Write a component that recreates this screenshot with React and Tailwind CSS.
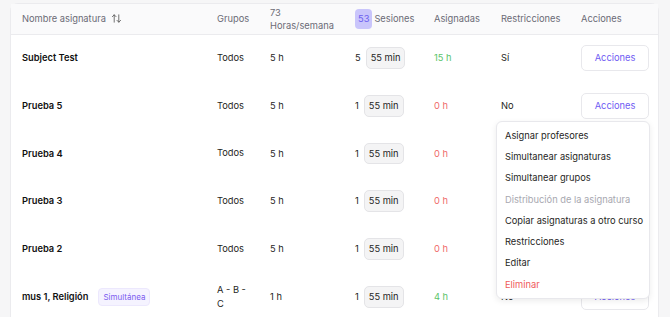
import React from 'react';
import { ArrowUpDown } from 'lucide-react';

const rows = [
  { name: 'Subject Test', grupos: 'Todos', horas: '5 h', count: 5, dur: '55 min', asig: '15 h', ok: true, restr: 'Sí' },
  { name: 'Prueba 5', grupos: 'Todos', horas: '5 h', count: 1, dur: '55 min', asig: '0 h', ok: false, restr: 'No' },
  { name: 'Prueba 4', grupos: 'Todos', horas: '5 h', count: 1, dur: '55 min', asig: '0 h', ok: false, restr: 'No' },
  { name: 'Prueba 3', grupos: 'Todos', horas: '5 h', count: 1, dur: '55 min', asig: '0 h', ok: false, restr: 'No' },
  { name: 'Prueba 2', grupos: 'Todos', horas: '5 h', count: 1, dur: '55 min', asig: '0 h', ok: false, restr: 'No' },
  { name: 'mus 1, Religión', tag: 'Simultánea', grupos: 'A - B - C', horas: '1 h', count: 1, dur: '55 min', asig: '4 h', ok: true, restr: 'No' },
];

const menuItems = [
  { label: 'Asignar profesores' },
  { label: 'Simultanear asignaturas' },
  { label: 'Simultanear grupos' },
  { label: 'Distribución de la asignatura', disabled: true },
  { label: 'Copiar asignaturas a otro curso' },
  { label: 'Restricciones' },
  { label: 'Editar' },
  { label: 'Eliminar', danger: true },
];

const App = () => {
  return (
    <div className="h-[317px] overflow-hidden bg-[#f6f6f7] pt-[3px] pl-[10px] pr-[11px] font-['Inter',sans-serif] text-[9.3px]">
      <div className="relative h-[400px] rounded-t-[8px] border border-[#ebebee] bg-white">
        <table className="w-full table-fixed border-collapse">
          <colgroup>
            <col className="w-[194px]" />
            <col className="w-[53px]" />
            <col className="w-[85px]" />
            <col className="w-[79px]" />
            <col className="w-[67px]" />
            <col className="w-[80px]" />
            <col />
          </colgroup>
          <thead>
            <tr className="h-[30px] bg-[#fafafb] text-left text-[#6b6b76] border-b border-[#ebebee]">
              <th className="pl-[11px] font-normal">
                <div className="flex items-center gap-[5px]">
                  Nombre asignatura
                  <ArrowUpDown className="h-[11px] w-[11px] text-[#555]" strokeWidth={1.8} />
                </div>
              </th>
              <th className="pl-[12px] font-normal">Grupos</th>
              <th className="pl-[12px] font-normal leading-[13px]">
                <div>73</div>
                <div>Horas/semana</div>
              </th>
              <th className="pl-[12px] font-normal">
                <div className="flex items-center gap-[2px]">
                  <span className="rounded-[4px] bg-[#c9c5fb] px-[3px] py-[3px] text-[#6c5ef0]">53</span>
                  Sesiones
                </div>
              </th>
              <th className="pl-[12px] font-normal">Asignadas</th>
              <th className="pl-[12px] font-normal">Restricciones</th>
              <th className="pl-[12px] font-normal">Acciones</th>
            </tr>
          </thead>
          <tbody>
            {rows.map((r) => (
              <tr key={r.name} className="h-[47.8px] text-[#1f1f24]">
                <td className="pl-[11px]">
                  <div className="flex items-center gap-[10px]">
                    <span className="font-semibold text-[#111]">{r.name}</span>
                    {r.tag && (
                      <span className="rounded-[4px] border border-[#ece8fd] bg-[#f5f3ff] px-[4px] py-[3px] text-[8px] leading-[10px] text-[#7c5cf0]">
                        {r.tag}
                      </span>
                    )}
                  </div>
                </td>
                <td className="pl-[12px] pr-[8px] leading-[14px]">{r.grupos}</td>
                <td className="pl-[12px]">{r.horas}</td>
                <td className="pl-[12px]">
                  <div className="flex items-center gap-[5px]">
                    <span>{r.count}</span>
                    <span className="rounded-[5px] border border-[#e4e4e7] bg-[#f4f4f5] px-[4px] py-[3px]">{r.dur}</span>
                  </div>
                </td>
                <td className={`pl-[12px] ${r.ok ? 'text-[#5cc46a]' : 'text-[#ef6b6b]'}`}>{r.asig}</td>
                <td className="pl-[12px]">{r.restr}</td>
                <td className="pl-[12px]">
                  <button className="h-[26px] w-[68px] rounded-[5px] border border-[#e8e8ec] bg-white text-[#6f5cf3]">
                    Acciones
                  </button>
                </td>
              </tr>
            ))}
          </tbody>
        </table>

        {/* Dropdown menu */}
        <div className="absolute left-[485px] top-[117px] w-[154px] rounded-[6px] border border-[#e8e8ec] bg-white py-[3px] shadow-[0_2px_6px_rgba(0,0,0,0.08)]">
          {menuItems.map((m) => (
            <div
              key={m.label}
              className={`flex h-[21.3px] items-center whitespace-nowrap px-[8px] ${m.disabled ? 'text-[#a8a8b0]' : m.danger ? 'text-[#ef5b5b]' : 'text-[#1f1f24]'}`}
            >
              {m.label}
            </div>
          ))}
        </div>
      </div>
    </div>
  );
};

export default App;
